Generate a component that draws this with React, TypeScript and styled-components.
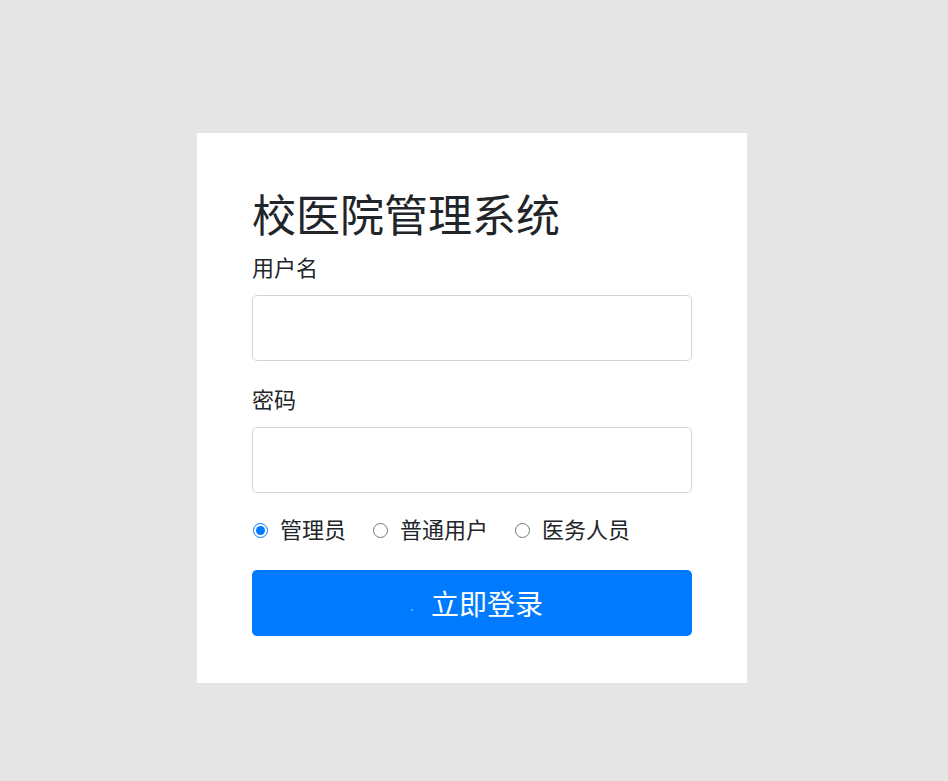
import React, { useState } from "react";
import styled, { createGlobalStyle } from "styled-components";

const GlobalStyle = createGlobalStyle`
  * { box-sizing: border-box; }
  html, body {
    margin: 0;
    padding: 0;
    background: #e5e5e5;
    font-family: "Liberation Sans", "Noto Sans CJK SC", sans-serif;
    color: #212529;
  }
`;

const Page = styled.div`
  min-height: 781px;
  display: flex;
  justify-content: center;
  align-items: flex-start;
  padding-top: 133px;
  padding-right: 4px;
`;

const Card = styled.form`
  width: 550px;
  height: 550px;
  background: #fff;
  padding: 55px;
  display: flex;
  flex-direction: column;

  & > * {
    flex-shrink: 0;
  }
`;

const Title = styled.h1`
  margin: 0 0 8px;
  padding-top: 3px;
  font-size: 44px;
  font-weight: 400;
  line-height: 1.2;
`;

const Label = styled.label`
  display: block;
  font-size: 22px;
  line-height: 33px;
  margin-bottom: 10px;
`;

const Field = styled.div`
  & + & {
    margin-top: 23px;
  }
`;

const Input = styled.input`
  display: block;
  width: 100%;
  height: 66px;
  padding: 0 16px;
  font-size: 20px;
  border: 1px solid #ced4da;
  border-radius: 5px;
  background: #fff;
  color: #495057;
  outline: none;
`;

const RadioRow = styled.div`
  display: flex;
  align-items: center;
  gap: 26px;
  height: 38px;
  margin: 19px 0 20px;
`;

const RadioOption = styled.label`
  display: flex;
  align-items: center;
  gap: 12px;
  font-size: 22px;
  line-height: 38px;
  cursor: pointer;
`;

const Radio = styled.input`
  margin: 0 0 0 1px;
  width: 15px;
  height: 15px;
  accent-color: #007bff;
`;

const SubmitButton = styled.button`
  display: flex;
  align-items: center;
  justify-content: center;
  width: 100%;
  height: 66px;
  border: none;
  border-radius: 5px;
  background: #007bff;
  color: #fff;
  font-family: inherit;
  font-size: 28px;
  cursor: pointer;
`;

const Spinner = styled.span`
  position: relative;
  display: inline-block;
  width: 30px;
  height: 30px;

  &::before {
    content: "";
    position: absolute;
    left: 10px;
    top: 21px;
    width: 2px;
    height: 2px;
    background: rgba(255, 255, 255, 0.35);
  }
`;

const roles = ["管理员", "普通用户", "医务人员"];

export default function App() {
  const [role, setRole] = useState("管理员");
  const [username, setUsername] = useState("");
  const [password, setPassword] = useState("");

  return (
    <>
      <GlobalStyle />
      <Page>
        <Card onSubmit={(e) => e.preventDefault()}>
          <Title>校医院管理系统</Title>
          <Field>
            <Label htmlFor="username">用户名</Label>
            <Input
              id="username"
              type="text"
              value={username}
              onChange={(e) => setUsername(e.target.value)}
            />
          </Field>
          <Field>
            <Label htmlFor="password">密码</Label>
            <Input
              id="password"
              type="password"
              value={password}
              onChange={(e) => setPassword(e.target.value)}
            />
          </Field>
          <RadioRow>
            {roles.map((r) => (
              <RadioOption key={r}>
                <Radio
                  type="radio"
                  name="role"
                  checked={role === r}
                  onChange={() => setRole(r)}
                />
                {r}
              </RadioOption>
            ))}
          </RadioRow>
          <SubmitButton type="submit">
            <Spinner />
            立即登录
          </SubmitButton>
        </Card>
      </Page>
    </>
  );
}
